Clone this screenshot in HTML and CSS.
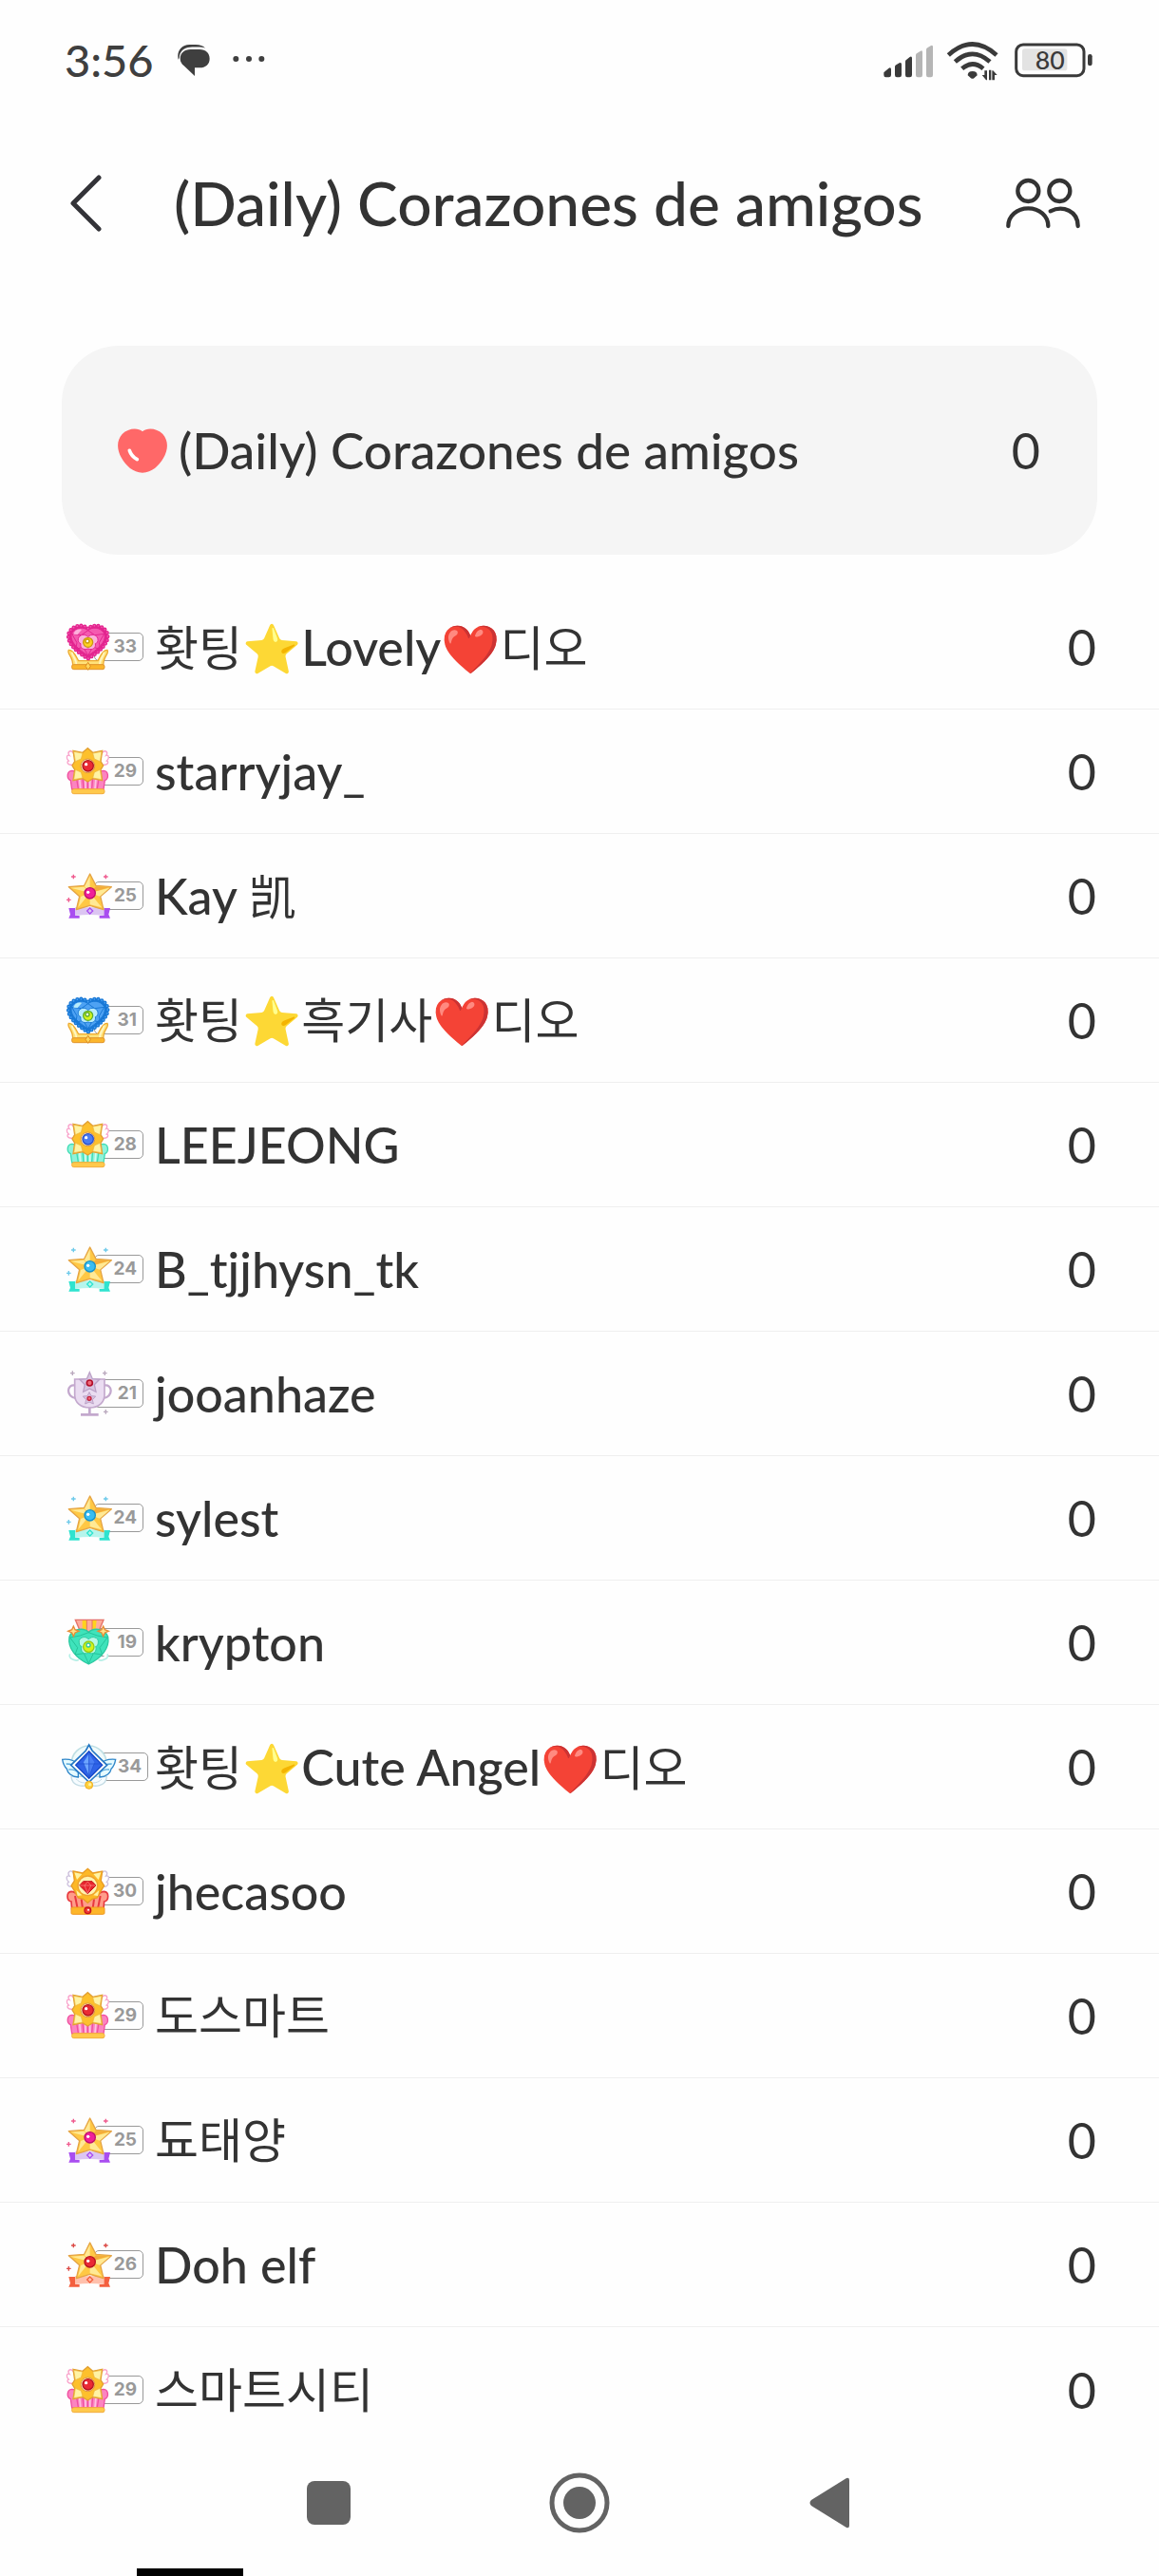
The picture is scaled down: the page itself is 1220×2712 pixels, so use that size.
FILE: index.html
```html
<!DOCTYPE html>
<html lang="es">
<head>
<meta charset="utf-8">
<meta name="viewport" content="width=device-width, initial-scale=1">
<title>(Daily) Corazones de amigos</title>
<link rel="stylesheet" href="styles.css">
</head>
<body>
<svg class="defs" aria-hidden="true">
  <symbol id="spark" viewBox="-8 -8 16 16"><path d="M0-7V7M-7 0H7" fill="none" stroke="currentColor" stroke-width="4"/></symbol>

  <!-- Lace heart on a gold stand: levels 31 and 33 -->
  <symbol id="lace" viewBox="0 0 150 150">
    <path d="M10 85c-8 12 18 24 12 52h98c-6-28 20-40 12-52-16-2-24 24-30 34H41C34 108 26 83 10 85z" fill="#ffe27a" stroke="#eda92f" stroke-width="4"/>
    <path d="M20 92c2 14 16 22 14 42M122 92c-2 14-16 22-14 42" fill="none" stroke="#fff6c4" stroke-width="5"/>
    <rect x="20" y="131" width="103" height="15" rx="6" fill="#fbb62c" stroke="#e0942c" stroke-width="3"/>
    <path d="M71 124l8 12-8 12-8-12z" fill="#ffd65a" stroke="#dd8b20" stroke-width="3"/>
    <path d="M71 17C58 4 26 4 12 28C-2 60 36 92 71 112C106 92 144 60 130 28C116 4 84 4 71 17z" fill="var(--a)" stroke="var(--a)" stroke-width="13" stroke-linecap="round" stroke-dasharray="0 12"/>
    <path d="M71 17C58 4 26 4 12 28C-2 60 36 92 71 112C106 92 144 60 130 28C116 4 84 4 71 17z" fill="none" stroke="var(--b)" stroke-width="5" stroke-linecap="round" stroke-dasharray="0 12"/>
    <path d="M71 23C59 12 32 12 20 32C10 58 42 84 71 102C100 84 132 58 122 32C110 12 83 12 71 23z" fill="var(--b)" stroke="var(--a)" stroke-width="3"/>
    <path d="M71 23L50 38 20 34l16 28-4 20 24-6 15 26 15-26 24 6-4-20 16-28-30 4z" fill="none" stroke="var(--a)" stroke-width="3"/>
    <path d="M25 35c3-12 15-18 26-14L38 36z" fill="var(--c)"/>
    <path d="M71 44C62 32 42 36 40 50c-2 9 4 14 8 15-3 12 8 22 23 16 15 6 26-4 23-16 4-1 10-6 8-15-2-14-22-18-31-6z" fill="var(--c)" stroke="var(--a)" stroke-width="3"/>
    <circle cx="71" cy="61" r="15" fill="var(--g)" stroke="var(--h)" stroke-width="4"/>
    <circle cx="69" cy="57" r="6" fill="#fff" stroke="var(--h)" stroke-width="4"/>
  </symbol>

  <!-- Gold flower on a cup: levels 28 and 29 -->
  <symbol id="flower" viewBox="0 0 150 150">
    <path d="M24 54C6 58 2 44 10 42 0 34 4 22 12 25 4 14 14 8 22 14l14 20zM116 54c18 4 22-10 14-12 10-8 6-20-2-17 8-11-2-17-10-11l-14 20z" fill="#fff" stroke="#f9a3cb" stroke-width="4"/>
    <path d="M20 132L16 104C2 98 4 74 20 73c10 0 15 6 18 12h64c3-6 8-12 18-12 16 1 18 25 4 31l-4 28z" fill="var(--b)" stroke="var(--a)" stroke-width="4"/>
    <path d="M34 92l6 38M54 96l3 34M70 98v32M86 96l-3 34M106 92l-6 38" stroke="var(--a)" stroke-width="4"/>
    <path d="M44 98l3 32M63 100v30M77 100v30M96 98l-3 32" stroke="var(--c)" stroke-width="5"/>
    <rect x="20" y="131" width="103" height="15" rx="6" fill="#ffc94c" stroke="#f2ac3c" stroke-width="3"/>
    <path d="M24 10l30 6 16-14 16 14 30-6-5 34 8 13-8 13 5 34-30-6-16 10-16-10-30 6 5-34-8-13 8-13z" fill="#fdc02c" stroke="#e2a032" stroke-width="4"/>
    <path d="M26 13l28 5-5 18-18 8zM114 13l-28 5 5 18 18 8zM26 101l28-5-5-18-18-8zM114 101l-28-5 5-18 18-8z" fill="#fff3a4" stroke="#eab23c" stroke-width="2"/>
    <circle cx="70" cy="58" r="22" fill="#fff0b8" stroke="#dd9440" stroke-width="3"/>
    <circle cx="71" cy="58" r="17" fill="var(--g)" stroke="var(--h)" stroke-width="4"/>
    <circle cx="65" cy="53" r="5" fill="#fff"/>
  </symbol>

  <!-- Star over a ribbon: levels 24, 25 and 26 -->
  <symbol id="star" viewBox="0 0 150 150">
    <g color="var(--s)"><use href="#spark" x="17" y="7" width="16" height="16"/><use href="#spark" x="119" y="7" width="16" height="16"/><use href="#spark" x="2" y="80" width="16" height="16"/></g>
    <path d="M10 114h22v24h12v8H10l5-12zM141 114h-22v24h-12v8h34l-5-12z" fill="var(--a)"/>
    <path d="M30 112h92v26q-46-6-92 0z" fill="var(--c)"/>
    <path d="M77 6l19 37 49 4-35 30 10 42-43-13-43 13 10-42L10 47l49-4z" fill="#ffc844" stroke="#e5a444" stroke-width="4" stroke-linejoin="round"/>
    <path d="M77 12v54L60 46zM16 50l42-3 19 19zM139 50l-31 27-31-11zM40 112l8-34 29-12zM114 112l-37-9V66z" fill="#ffe995"/>
    <path d="M77 66l19-20 40 3z" fill="#f3ac3a"/>
    <circle cx="77" cy="67" r="17" fill="var(--g)" stroke="var(--h)" stroke-width="4"/>
    <circle cx="71" cy="64" r="5" fill="#fff"/>
    <path d="M77 114l9 9-9 9-9-9z" fill="var(--c)" stroke="var(--a)" stroke-width="4"/>
  </symbol>

  <!-- Lilac trophy: level 21 -->
  <symbol id="trophy" viewBox="0 0 150 150">
    <g color="#b9a7bd"><use href="#spark" x="14" y="3" width="16" height="16"/><use href="#spark" x="116" y="3" width="16" height="16"/><use href="#spark" x="119" y="125" width="16" height="16"/></g>
    <path d="M32 50C2 42 0 88 34 90M120 50c30-8 32 38-2 40" fill="none" stroke="#c3a8cd" stroke-width="7"/>
    <path d="M29 30h94v50c0 24-20 40-47 40S29 104 29 80z" fill="#eadcf1" stroke="#c3a8cd" stroke-width="5"/>
    <path d="M76 120v20M48 142h56" stroke="#c3a8cd" stroke-width="8"/>
    <path d="M76 8l9 21 22 2-16 16 5 23-20-10-20 10 5-23-16-16 22-2z" fill="#d8c6e2" stroke="#bba1c7" stroke-width="4"/>
    <path d="M75 71l6 12 14 1-10 11 3 13-13-6-13 6 3-13-10-11 14-1z" fill="#d8c6e2" stroke="#bba1c7" stroke-width="3"/>
    <circle cx="76" cy="42" r="9" fill="#ef6a7a" stroke="#b3102c" stroke-width="5"/>
    <circle cx="75" cy="91" r="6" fill="#ef6a7a" stroke="#c3203c" stroke-width="4"/>
  </symbol>

  <!-- Green heart medal: level 19 -->
  <symbol id="medal" viewBox="0 0 150 150">
    <path d="M14 112c-8 14 18 24 28 18M132 112c8 14-18 24-28 18" fill="#fff" stroke="#b5efe6" stroke-width="5"/>
    <path d="M31 4h89l-16 38H47z" fill="#ffad9b" stroke="#e5736a" stroke-width="4"/>
    <path d="M53 6h14v36H53zM84 6h14l-4 36H84z" fill="#ffd21e"/>
    <path d="M67 6v36M84 6v36" stroke="#e5736a" stroke-width="3"/>
    <path d="M73 44C60 28 22 30 12 58c-6 36 22 68 61 86 39-18 67-50 61-86-10-28-48-30-61-14z" fill="#3fe3bb" stroke="#2cc9a1" stroke-width="4"/>
    <path d="M73 44L46 54 14 60l24 32-8 22 28-4 15 32 15-32 28 4-8-22 24-32-32-6z" fill="none" stroke="#25c39a" stroke-width="3"/>
    <path d="M73 66c-9-14-34-6-30 10 0 8 4 12 8 12-6 16 8 28 22 20 14 8 28-4 22-20 4 0 8-4 8-12 4-16-21-24-30-10z" fill="#b6f8e6" stroke="#2cc9a1" stroke-width="3"/>
    <circle cx="73" cy="89" r="17" fill="#d6f31a" stroke="#93cc16" stroke-width="4"/>
    <circle cx="72" cy="84" r="6" fill="#fff" stroke="#2cc9a1" stroke-width="4"/>
    <path d="M25 24l5 11 12 5-12 5-5 11-5-11-12-5 12-5zM119 24l5 11 12 5-12 5-5 11-5-11-12-5 12-5z" fill="#ffe08a" stroke="#e78b35" stroke-width="4"/>
  </symbol>

  <!-- Winged sapphire: level 34 -->
  <symbol id="sapphire" viewBox="0 0 150 150">
    <circle cx="74" cy="64" r="55" fill="#f0fafa" stroke="#bfdfe4" stroke-width="5"/>
    <path d="M18 106c2 34 40 32 56 26 16 6 54 8 56-26z" fill="#f6fcff" stroke="#c3dbe4" stroke-width="4"/>
    <path d="M34 114c10 12 26 14 40 10 14 4 30 2 40-10" fill="none" stroke="#c3dbe4" stroke-width="3"/>
    <path d="M-10 52c22-2 40 4 50 16v40C18 106 6 94 4 82-4 74-8 64-10 52zM158 52c-22-2-40 4-50 16v40c22-2 34-14 36-26 8-8 12-18 14-30z" fill="#e6fbff" stroke="#2e86c9" stroke-width="4"/>
    <path d="M2 66c16 0 28 4 38 14M10 84c12-2 22 2 30 10M146 66c-16 0-28 4-38 14M138 84c-12-2-22 2-30 10" fill="none" stroke="#58a9dc" stroke-width="4"/>
    <path d="M74 6l10 18 47 46-47 44-10 10-10-10-47-44 47-46z" fill="#fff" stroke="#2477c4" stroke-width="5"/>
    <path d="M74 26l42 44-42 42-42-42z" fill="#2f63e8" stroke="#1748c6" stroke-width="4"/>
    <path d="M74 34L56 62l18 44z" fill="#6da5ff"/><path d="M74 34l18 28-18 44z" fill="#4a7ff4"/>
    <path d="M38 66h72M56 62l18 44 18-44M74 34v72" fill="none" stroke="#1c50cf" stroke-width="2"/>
    <circle cx="74" cy="133" r="12" fill="#ffd23c" stroke="#f0aa22" stroke-width="3"/><circle cx="77" cy="131" r="5" fill="#fff0a0"/>
  </symbol>

  <!-- Ruby sun on a red crown: level 30 -->
  <symbol id="ruby" viewBox="0 0 150 150">
    <path d="M24 60C6 64 2 50 10 46 0 38 2 24 12 27 4 16 14 8 22 14l14 20zM116 60c18 4 22-10 14-14 10-8 8-22-2-19 8-11-2-19-10-13l-14 20z" fill="#fff" stroke="#cdc0dc" stroke-width="4"/>
    <path d="M20 132l-2-24C2 104 2 78 18 76c10 0 16 6 20 12h64c4-6 10-12 20-12 16 2 16 28 0 32l-2 24z" fill="#ff9c8a" stroke="#e8383e" stroke-width="5"/>
    <path d="M30 90l8 40M50 100l4 30M90 100l-4 30M110 90l-8 40" stroke="#e8383e" stroke-width="6"/>
    <rect x="18" y="126" width="105" height="22" rx="4" fill="#fdb62a" stroke="#ee9722" stroke-width="3"/>
    <path d="M24 12l30 6L70 4l16 14 30-6-4 30 10 16-10 16-12 22-16 4-14 12-14-12-16-4-12-22-10-16 10-16z" fill="#fdb826" stroke="#e89c26" stroke-width="4"/>
    <path d="M28 16l24 5-16 18zM112 16l-24 5 16 18zM38 90l-4-18 18 16zM102 90l4-18-18 16z" fill="#fff3a4"/>
    <circle cx="70" cy="58" r="31" fill="#fff2b0" stroke="#eea32e" stroke-width="4"/>
    <path d="M56 44h28l12 13-26 26-26-26z" fill="#e8242c" stroke="#c4141f" stroke-width="3"/>
    <path d="M45 57h50M60 57l10 24 10-24-10-12z" fill="none" stroke="#ff8b88" stroke-width="2"/>
    <circle cx="70" cy="136" r="10" fill="#ef3b33" stroke="#c4141f" stroke-width="4"/><circle cx="72" cy="134" r="3" fill="#fff"/>
  </symbol>
</svg>

<div class="screen">
  <div class="status">
    <div class="status-left">
      <time class="clock">3:56</time>
      <svg class="notices" viewBox="558 140 282 102" aria-hidden="true" fill="#3f3f3f">
        <path d="M563 190c-6-26 10-47 35-47h20c14 0 24 4 30 11-10-4-20-4-48-3-20 1-33 14-34 34z"/>
        <path d="M602 158h28c20 0 32 12 32 29s-12 29-32 29h-15v26l-34-32c-8-7-12-14-12-23 0-17 13-29 33-29z"/>
        <circle cx="745" cy="188" r="9"/><circle cx="786" cy="188" r="9"/><circle cx="826" cy="188" r="9"/>
      </svg>
    </div>
    <svg class="status-right" viewBox="210 125 672 129" role="img" aria-label="Señal, wifi, batería 80">
      <g fill="#3a3a3a">
        <path d="M217 228l16-14q7-3 7 4v18q0 7-7 7h-10q-6 0-6-7zM252 210q0-4 4-6l10-6q7-3 7 4v34q0 7-7 7h-8q-6 0-6-7zM285 193q0-4 4-6l10-8q7-4 7 4v53q0 7-7 7h-8q-6 0-6-7z"/>
        <path d="M318 173q0-4 4-6l11-7q6-3 6 4v72q0 7-6 7h-9q-6 0-6-7zM351 156q0-4 4-6l11-7q6-3 6 4v89q0 7-6 7h-9q-6 0-6-7z" fill="#b5b5b5"/>
        <path d="M482 237q0-13 15-13t15 13l-10 9q-5 3-10 0z"/>
        <path d="M527 236h8v-14h8v30h-3zM549 220h7v32h-7zM559 252v-30h3l13 14h-8v16z"/>
        <rect x="861" y="170" width="14" height="37" rx="7"/>
      </g>
      <g fill="none" stroke="#3a3a3a" stroke-width="14">
        <path d="M421 173q76-69 152 0"/><path d="M442 194q55-49 110 0"/><path d="M464 216q33-29 67 0"/>
      </g>
      <rect x="654" y="153" width="142" height="69" rx="8" fill="#e3e3e3"/>
      <rect x="635" y="140" width="214" height="98" rx="22" fill="none" stroke="#3a3a3a" stroke-width="9"/>
      <text class="charge" x="742" y="218" text-anchor="middle">80</text>
    </svg>
  </div>

  <header class="bar">
    <button class="icon-btn" aria-label="Atrás"><svg width="34" height="60" viewBox="0 0 34 60"><path d="M30 3L3 30l27 27" fill="none" stroke="#333338" stroke-width="5" stroke-linecap="round" stroke-linejoin="round"/></svg></button>
    <h1>(Daily) Corazones de amigos</h1>
    <button class="icon-btn" aria-label="Amigos"><svg width="78" height="54" viewBox="597 564 234 162" fill="none" stroke="#333" stroke-width="13" stroke-linecap="round"><circle cx="667" cy="606" r="33"/><circle cx="766" cy="606" r="33"/><path d="M604 717c0-32 28-56 63-56s63 24 63 56M737 670c40-20 87 0 87 47"/></svg></button>
  </header>

  <main>
    <section class="card">
      <svg class="heart" viewBox="72 94 156 141" aria-hidden="true"><path d="M150 104c16-14 46-10 64 8 18 20 18 48 2 76-14 24-36 46-66 46s-52-22-66-46c-16-28-16-56 2-76 18-18 48-22 64-8z" fill="#ff6868"/><path d="M109 164q6 18 24 28" fill="none" stroke="#fff" stroke-width="11" stroke-linecap="round"/></svg>
      <h2>(Daily) Corazones de amigos</h2>
      <span class="count">0</span>
    </section>

    <ul class="list">
      <li><span class="badge pink"><svg><use href="#lace"/></svg><b>33</b></span><span class="name">홧팅<i>⭐</i><span class="latin">Lovely</span><i>❤️</i>디오</span><span class="count">0</span></li>
      <li><span class="badge rose"><svg><use href="#flower"/></svg><b>29</b></span><span class="name latin">starryjay_</span><span class="count">0</span></li>
      <li><span class="badge violet"><svg><use href="#star"/></svg><b>25</b></span><span class="name"><span class="latin">Kay </span>凯</span><span class="count">0</span></li>
      <li><span class="badge blue"><svg><use href="#lace"/></svg><b>31</b></span><span class="name">홧팅<i>⭐</i>흑기사<i>❤️</i>디오</span><span class="count">0</span></li>
      <li><span class="badge mint"><svg><use href="#flower"/></svg><b>28</b></span><span class="name latin">LEEJEONG</span><span class="count">0</span></li>
      <li><span class="badge aqua"><svg><use href="#star"/></svg><b>24</b></span><span class="name latin">B_tjjhysn_tk</span><span class="count">0</span></li>
      <li><span class="badge"><svg><use href="#trophy"/></svg><b>21</b></span><span class="name latin">jooanhaze</span><span class="count">0</span></li>
      <li><span class="badge aqua"><svg><use href="#star"/></svg><b>24</b></span><span class="name latin">sylest</span><span class="count">0</span></li>
      <li><span class="badge"><svg><use href="#medal"/></svg><b>19</b></span><span class="name latin">krypton</span><span class="count">0</span></li>
      <li><span class="badge wide"><svg><use href="#sapphire"/></svg><b>34</b></span><span class="name">홧팅<i>⭐</i><span class="latin">Cute Angel</span><i>❤️</i>디오</span><span class="count">0</span></li>
      <li><span class="badge"><svg><use href="#ruby"/></svg><b>30</b></span><span class="name latin">jhecasoo</span><span class="count">0</span></li>
      <li><span class="badge rose"><svg><use href="#flower"/></svg><b>29</b></span><span class="name">도스마트</span><span class="count">0</span></li>
      <li><span class="badge violet"><svg><use href="#star"/></svg><b>25</b></span><span class="name">됴태양</span><span class="count">0</span></li>
      <li><span class="badge coral"><svg><use href="#star"/></svg><b>26</b></span><span class="name latin">Doh elf</span><span class="count">0</span></li>
      <li><span class="badge rose"><svg><use href="#flower"/></svg><b>29</b></span><span class="name">스마트시티</span><span class="count">0</span></li>
    </ul>
  </main>

  <nav class="keys">
    <button aria-label="Recientes"><svg width="64" height="64" fill="#636363"><rect x="9" y="9" width="46" height="46" rx="8"/></svg></button>
    <button aria-label="Inicio"><svg width="64" height="64" fill="#636363"><circle cx="32" cy="32" r="29" fill="none" stroke="#636363" stroke-width="5"/><circle cx="32" cy="32" r="17"/></svg></button>
    <button aria-label="Volver"><svg width="64" height="64" fill="#636363"><path d="M12 29L49 6q3-1 3 2v48q0 3-3 2L12 35q-3-3 0-6z"/></svg></button>
  </nav>
  <div class="handle"></div>
</div>
</body>
</html>
```

FILE: styles.css
```css
* { box-sizing: border-box; }

body {
  margin: 0;
  background: #fefefe;
  color: #333;
  font-family: Lato, "Noto Sans CJK KR", "Noto Color Emoji", sans-serif;
}

button {
  padding: 0;
  border: 0;
  background: none;
  display: flex;
  align-items: center;
  justify-content: center;
}

.defs { display: none; }

.screen { display: flex; flex-direction: column; }

.status {
  display: flex;
  align-items: center;
  justify-content: space-between;
  height: 126px;
  padding: 0 68px;
}
.status-left { display: flex; align-items: center; gap: 24px; }
.clock { font-size: 47px; line-height: 56px; font-weight: 500; color: #3f3f3f; }
.notices { width: 94px; height: 34px; }
.status-right { width: 224px; height: 43px; }
.charge { font-size: 80px; font-weight: 500; fill: #3a3a3a; }

.bar {
  display: flex;
  align-items: center;
  height: 176px;
  padding: 0 83px 0 74px;
}
.bar h1 {
  flex: 1;
  margin: 0 0 0 75px;
  font-size: 64px;
  line-height: 76px;
  font-weight: 500;
  white-space: nowrap;
}

.card {
  display: flex;
  align-items: center;
  height: 220px;
  margin: 62px 65px 32px;
  padding: 0 60px 0 59px;
  border-radius: 60px;
  background: #f5f5f5;
}
.heart { width: 52px; height: 47px; }
.card h2 {
  flex: 1;
  margin: 0 0 0 12px;
  font-size: 53px;
  line-height: 64px;
  font-weight: 500;
  white-space: nowrap;
}

.count { font-size: 52px; line-height: 64px; }

.list { margin: 0; padding: 0; list-style: none; }
.list li {
  display: flex;
  align-items: center;
  height: 131px;
  padding: 0 66px 0 65px;
  border-bottom: 1px solid #efefef;
}
.list li:last-child { border-bottom: 0; }
.name { flex: 1; font-size: 50px; line-height: 64px; white-space: nowrap; }
.name i { font-style: normal; }
.latin { font-size: 52px; font-weight: 500; }

.badge {
  display: flex;
  align-items: center;
  width: 98px;
  padding-left: 4px;
}
.badge svg { position: relative; flex: none; width: 50px; height: 50px; overflow: visible; }
.badge b {
  width: 52px;
  height: 30px;
  margin-left: -20px;
  padding-right: 6px;
  border: 1px solid #999;
  border-radius: 5px;
  color: #999;
  font: 700 19px/28px Inter, sans-serif;
  text-align: right;
}
.badge.wide b { width: 57px; }
symbol { overflow: visible; }

.pink { --a: #e3258f; --b: #f45bb0; --c: #fdb0dc; --g: #ffd21e; --h: #c99a10; }
.blue { --a: #1878d6; --b: #4ea2f3; --c: #b8ecfb; --g: #d6f31a; --h: #5cae2c; }
.rose { --a: #f04fa0; --b: #fb84c0; --c: #fdc3e0; --g: #ea2a35; --h: #b5131f; }
.mint { --a: #3edcb4; --b: #8ff3da; --c: #d3fbf0; --g: #4a7cf2; --h: #2c4fcb; }
.violet { --a: #a94df0; --b: #d6b8f5; --c: #dcc5f2; --g: #f0209a; --h: #bd0f6c; --s: #ef5a8e; }
.aqua { --a: #2fe3cf; --b: #b4f5ec; --c: #b6f5ec; --g: #39bdf2; --h: #1590c9; --s: #6cc9ea; }
.coral { --a: #f4603f; --b: #ffc0ac; --c: #ffc0ac; --g: #ea2a35; --h: #b5131f; --s: #dc4a45; }

.keys { display: flex; justify-content: center; height: 108px; }
.keys button { width: 264px; }

.handle { width: 112px; height: 8px; margin: 15px 0 0 144px; background: #000; }
```
